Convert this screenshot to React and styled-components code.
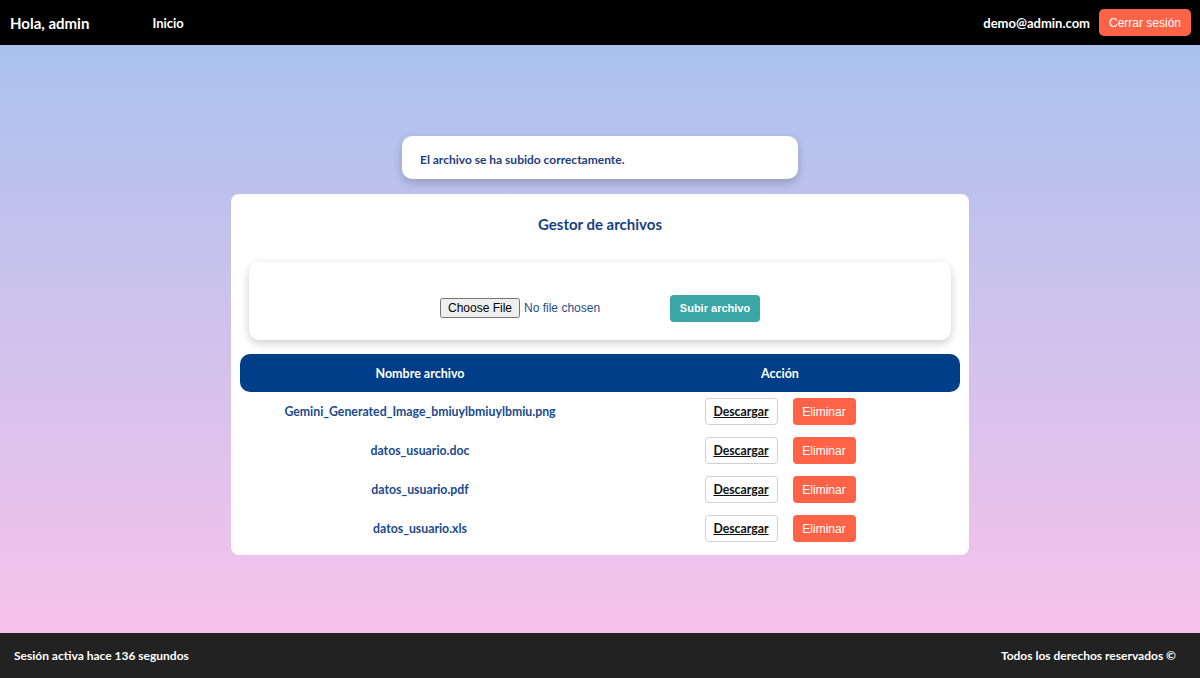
import React from "react";
import styled, { createGlobalStyle } from "styled-components";

const GlobalStyle = createGlobalStyle`
  body {
    margin: 0;
    font-family: Lato, "Open Sans", sans-serif;
  }
`;

const files = [
  "Gemini_Generated_Image_bmiuylbmiuylbmiu.png",
  "datos_usuario.doc",
  "datos_usuario.pdf",
  "datos_usuario.xls",
];

export default function App() {
  return (
    <Page>
      <GlobalStyle />
      <Nav>
        <Greeting>Hola, admin</Greeting>
        <NavLink>Inicio</NavLink>
        <NavRight>
          <Email>demo@admin.com</Email>
          <LogoutButton>Cerrar sesión</LogoutButton>
        </NavRight>
      </Nav>

      <Main>
        <Alert>El archivo se ha subido correctamente.</Alert>
        <Card>
          <Title>Gestor de archivos</Title>
          <UploadBox>
            <FileInput type="file" />
            <UploadButton>Subir archivo</UploadButton>
          </UploadBox>
          <Table>
            <HeaderRow>
              <HeaderCell>Nombre archivo</HeaderCell>
              <HeaderCell>Acción</HeaderCell>
            </HeaderRow>
            {files.map((name) => (
              <Row key={name}>
                <FileName>{name}</FileName>
                <Actions>
                  <DownloadButton>Descargar</DownloadButton>
                  <DeleteButton>Eliminar</DeleteButton>
                </Actions>
              </Row>
            ))}
          </Table>
        </Card>
      </Main>

      <Footer>
        <span>Sesión activa hace 136 segundos</span>
        <span>Todos los derechos reservados ©</span>
      </Footer>
    </Page>
  );
}

const Page = styled.div`
  min-height: 100vh;
  display: flex;
  flex-direction: column;
`;

const Nav = styled.nav`
  height: 45px;
  background: #000;
  color: #fff;
  display: flex;
  align-items: center;
  padding: 0 9px 0 10px;
`;

const Greeting = styled.span`
  font-size: 15px;
  font-weight: 700;
`;

const NavLink = styled.span`
  margin-left: 63px;
  font-size: 13px;
  font-weight: 700;
`;

const NavRight = styled.div`
  margin-left: auto;
  display: flex;
  align-items: center;
  gap: 9px;
`;

const Email = styled.span`
  font-size: 13px;
  font-weight: 700;
`;

const LogoutButton = styled.button`
  width: 92px;
  height: 27px;
  padding: 0;
  border: none;
  border-radius: 5px;
  background: #ff6347;
  color: #fff;
  font-family: "Liberation Sans", Arial, sans-serif;
  font-size: 12px;
  white-space: nowrap;
`;

const Main = styled.main`
  flex: 1;
  display: flex;
  flex-direction: column;
  align-items: center;
  padding-top: 91px;
  background: linear-gradient(180deg, #aac2ee 0%, #f7c2eb 100%);
`;

const Alert = styled.div`
  width: 396px;
  height: 43px;
  box-sizing: border-box;
  padding: 3px 18px 0;
  display: flex;
  align-items: center;
  background: #fff;
  border-radius: 10px;
  box-shadow: 0 4px 10px rgba(0, 0, 0, 0.2);
  color: #1c3d7e;
  font-size: 12px;
  font-weight: 700;
`;

const Card = styled.section`
  margin-top: 15px;
  width: 738px;
  box-sizing: border-box;
  padding: 20px 9px 7px;
  background: #fff;
  border-radius: 8px;
`;

const Title = styled.h2`
  margin: 0;
  text-align: center;
  font-size: 15px;
  line-height: 20px;
  font-weight: 700;
  color: #163f82;
`;

const UploadBox = styled.div`
  margin: 28px 9px 0;
  height: 78px;
  box-sizing: border-box;
  padding-top: 14px;
  display: flex;
  align-items: center;
  justify-content: center;
  background: #fff;
  border-radius: 10px;
  box-shadow: 0 3px 10px rgba(0, 0, 0, 0.2);
`;

const FileInput = styled.input`
  width: 230px;
  color: #1d4d8f;
  font-family: "Liberation Sans", Arial, sans-serif;
  font-size: 12px;
`;

const UploadButton = styled.button`
  width: 90px;
  height: 27px;
  padding: 0;
  border: none;
  border-radius: 4px;
  background: #3aa6a6;
  color: #fff;
  font-family: "Liberation Sans", Arial, sans-serif;
  font-size: 11px;
  font-weight: 700;
  white-space: nowrap;
`;

const Table = styled.div`
  margin-top: 14px;
`;

const HeaderRow = styled.div`
  height: 38px;
  display: grid;
  grid-template-columns: 1fr 1fr;
  align-items: center;
  background: #013e89;
  border-radius: 10px;
`;

const HeaderCell = styled.div`
  text-align: center;
  color: #fff;
  font-size: 12.5px;
  font-weight: 700;
`;

const Row = styled.div`
  height: 39px;
  display: grid;
  grid-template-columns: 1fr 1fr;
  align-items: center;
`;

const FileName = styled.div`
  text-align: center;
  color: #1b4a8d;
  font-size: 12.3px;
  font-weight: 700;
`;

const Actions = styled.div`
  display: flex;
  justify-content: center;
  gap: 15px;
`;

const DownloadButton = styled.button`
  width: 73px;
  height: 27px;
  padding: 0;
  background: #fff;
  border: 1px solid #d0d0d0;
  border-radius: 4px;
  color: #111;
  font-family: Lato, sans-serif;
  font-size: 12.3px;
  font-weight: 700;
  text-decoration: underline;
`;

const DeleteButton = styled.button`
  width: 63px;
  height: 27px;
  padding: 0;
  border: none;
  border-radius: 4px;
  background: #ff6347;
  color: #fff;
  font-family: "Liberation Sans", Arial, sans-serif;
  font-size: 12px;
`;

const Footer = styled.footer`
  height: 45px;
  display: flex;
  align-items: center;
  justify-content: space-between;
  padding: 0 24px 0 14px;
  background: #222;
  color: #fff;
  font-size: 12px;
  font-weight: 700;
`;
